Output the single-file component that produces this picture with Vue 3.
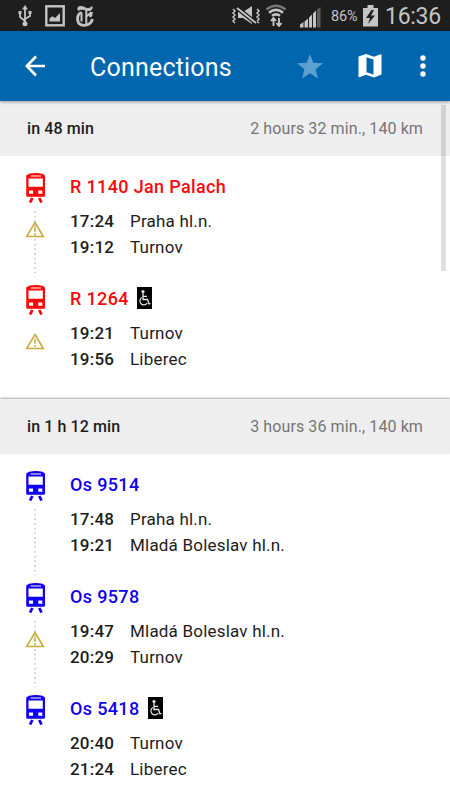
<template>
  <div class="screen">
    <div class="status-bar">
      <svg class="usb" width="14" height="22" viewBox="0 0 14 22" fill="none" stroke="#c4c4c4" stroke-width="1.8">
        <path d="M7 18V4M2 7v5l5 4M12 7v4l-5 3" />
        <path d="M7 0l3 4.5H4zM.5 6h3v3h-3zM10.5 6h3v3h-3z" fill="#c4c4c4" stroke="none" />
        <circle cx="7" cy="18.8" r="2.5" fill="#c4c4c4" stroke="none" />
      </svg>
      <svg class="picture" width="20" height="22" viewBox="0 0 20 22">
        <rect x="1.3" y="1.3" width="17.4" height="19" fill="none" stroke="#c4c4c4" stroke-width="2.4" />
        <path d="M4.5 16.5v-3l3-2.3 2.5 1.8 5-5v8.5z" fill="#c4c4c4" />
      </svg>
      <svg class="times" width="18" height="22" viewBox="0 0 18 22" fill="none" stroke="#c4c4c4">
        <path d="M2.5 5.5C0 1.5 5 .5 8 2.2s5.5 2 8-.7c1 3-2 4.800-5 3.800S4.500 3.500 2.500 5.500z" fill="#c4c4c4" stroke-width="1" />
        <path d="M5.5 7.5C.5 9 .5 17.5 4.500 19.500s10.500.500 12-5.500" stroke-width="2.800" />
        <path d="M10.300 5v14M5.500 7.500v9M10.500 11.500c1.500-2 3-2.500 5-4.500M16 7l-1 4" stroke-width="2" />
        <circle cx="14.500" cy="10.500" r="1.700" fill="#c4c4c4" stroke="none" />
      </svg>

      <svg class="mute" width="30" height="22" viewBox="0 0 30 22" fill="none" stroke="#c4c4c4">
        <path d="M2 4l2 2-2 2 2 2-2 2 2 2-2 2 2 2M26 4l2 2-2 2 2 2-2 2 2 2-2 2 2 2" stroke-width="1.5" />
        <path d="M7 7h5l9-6v18l-9-6H7z" fill="#c4c4c4" stroke="none" />
        <path d="M6 3l19 15" stroke="#1e1e1e" stroke-width="4.5" />
        <path d="M6 3l19 15" stroke-width="2" />
      </svg>
      <svg class="wifi" width="22" height="23" viewBox="0 0 22 23" fill="none" stroke="#c4c4c4">
        <path d="M1.5 5.5q9.500-7.500 19 0" stroke="#777" stroke-width="2.500" />
        <path d="M4 8.700q7-5.500 14 0M7 11.800q4-3 8 0" stroke-width="2.600" />
        <path d="M8.500 22v-8M6 17l2.500-3 2.500 3M14 14v8M11.500 19l2.500 3 2.500-3" stroke-width="1.900" />
      </svg>
      <svg class="signal" width="21" height="21" viewBox="0 0 21 21">
        <path d="M0 20.500v-3l3.500-2.500v5.500zM4.500 20.500v-6l3.500-3v9zM9 20.500v-10l3-3v13zM13 20.500v-14l3-3v17z" fill="#c4c4c4" />
        <path d="M17 20.500v-18L20.500 0v20.500z" fill="#5c5c5c" />
      </svg>
      <span class="percent">86%</span>
      <svg class="battery" width="15" height="22" viewBox="0 0 15 22">
        <path d="M4.500 0h6v3H15v18.500H0V3h4.500z" fill="#c4c4c4" />
        <path d="M8.500 5L3 13h4l-2 6 7-8.500H8L11 5z" fill="#1e1e1e" />
      </svg>
      <span class="clock">16:36</span>
    </div>

    <header class="toolbar">
      <svg class="back" width="22" height="22" viewBox="0 0 22 22" fill="none" stroke="#fff" stroke-width="2.700">
        <path d="M11 1.500L1.800 11l9.200 9.500M2 11h18" />
      </svg>
      <h1>Connections</h1>
      <svg class="star" width="26" height="25" viewBox="0 0 26 25">
        <path d="M13 0l3.300 8.800 9.700.500-7.500 6 2.500 9.300-8-5.300-8 5.300 2.500-9.300L0 9.300l9.700-.500z" fill="#5da0d2" />
      </svg>
      <svg class="map" width="24" height="24" viewBox="0 0 24 24">
        <path d="M.500 2.500L8 0l8 2.700L22.500.300q1-.300 1 .800v19.500L16 23.500 8 20.700 1.500 23.300q-1 .200-1-.800z" fill="#fff" />
        <path d="M8.500 3.300l7 2.300v15l-7-2.400z" fill="#0066ae" />
      </svg>
      <svg class="more" width="6" height="22" viewBox="0 0 6 22" fill="#fff">
        <circle cx="3" cy="3" r="2.700" />
        <circle cx="3" cy="11" r="2.700" />
        <circle cx="3" cy="19" r="2.700" />
      </svg>
    </header>

    <main class="list">
      <div class="scrollbar"></div>
      <section v-for="c in connections" :key="c.start" class="connection">
        <div class="summary">
          <span class="start">{{ c.start }}</span>
          <span class="length">{{ c.length }}</span>
        </div>
        <div class="trains">
          <article v-for="(t, i) in c.trains" :key="t.name" class="train" :class="t.type">
            <div class="rail">
              <svg class="vehicle" width="20" height="30" viewBox="0 0 20 30">
                <path
                  fill="currentColor"
                  fill-rule="evenodd"
                  d="M3 .8q6.700-1.600 13.400 0l2.600 1.700v20q0 1.300-1.300 1.300H1.500Q.200 23.800 .200 22.500v-20zM4.500 2.400v1.200h10.500V2.400zM2.500 5.500v8.200h14.300V5.500zM3 17.600v3.200h4v-3.200zM12.300 17.600v3.200h4v-3.200z"
                />
                <path d="M6.300 25L4.100 29.500M13.300 25l2.200 4.500" stroke="currentColor" stroke-width="2.800" />
              </svg>
              <svg v-if="i < c.trains.length - 1" class="dots" width="4" height="70" viewBox="0 0 4 70">
                <path d="M2 1v66" stroke="#ccc" stroke-width="1.600" stroke-dasharray="1.700 2.970" />
              </svg>
              <svg v-if="t.warning" class="warning" width="20" height="17" viewBox="0 0 20 17" fill="none" stroke="#c9ad3c">
                <path d="M10 1.500L18.300 15.500H1.700z" stroke-width="1.600" />
                <path d="M10 5.800v5M10 12v1.700" stroke-width="1.500" />
              </svg>
            </div>
            <div class="info">
              <h2>
                {{ t.name }}
                <svg v-if="t.wheelchair" class="wheelchair" width="15" height="22" viewBox="0 0 15 22" fill="none" stroke="#e8e8e8">
                  <rect width="15" height="22" fill="#000" stroke="none" />
                  <circle cx="6" cy="4.500" r="1.600" fill="#e8e8e8" stroke="none" />
                  <path d="M6 6v6.500h4.500l1.500 4.500 1.500-.500M6 9.300h4" stroke-width="1.300" />
                  <path d="M4.800 10.500a4 4 0 1 0 5.500 5.500" stroke-width="1.200" />
                </svg>
              </h2>
              <div v-for="s in t.stops" :key="s.time" class="stop">
                <span class="time">{{ s.time }}</span>
                <span class="place">{{ s.place }}</span>
              </div>
            </div>
          </article>
        </div>
      </section>
    </main>
  </div>
</template>

<script setup>
const connections = [
  {
    start: 'in 48 min',
    length: '2 hours 32 min., 140 km',
    trains: [
      {
        name: 'R 1140 Jan Palach',
        type: 'fast',
        warning: true,
        stops: [
          { time: '17:24', place: 'Praha hl.n.' },
          { time: '19:12', place: 'Turnov' }
        ]
      },
      {
        name: 'R 1264',
        type: 'fast',
        warning: true,
        wheelchair: true,
        stops: [
          { time: '19:21', place: 'Turnov' },
          { time: '19:56', place: 'Liberec' }
        ]
      }
    ]
  },
  {
    start: 'in 1 h 12 min',
    length: '3 hours 36 min., 140 km',
    trains: [
      {
        name: 'Os 9514',
        type: 'local',
        stops: [
          { time: '17:48', place: 'Praha hl.n.' },
          { time: '19:21', place: 'Mladá Boleslav hl.n.' }
        ]
      },
      {
        name: 'Os 9578',
        type: 'local',
        warning: true,
        stops: [
          { time: '19:47', place: 'Mladá Boleslav hl.n.' },
          { time: '20:29', place: 'Turnov' }
        ]
      },
      {
        name: 'Os 5418',
        type: 'local',
        wheelchair: true,
        stops: [
          { time: '20:40', place: 'Turnov' },
          { time: '21:24', place: 'Liberec' }
        ]
      }
    ]
  }
]
</script>

<style>
body {
  margin: 0;
}
</style>

<style scoped>
.screen {
  display: flex;
  flex-direction: column;
  width: 450px;
  height: 800px;
  overflow: hidden;
  background: #fff;
  font-family: Roboto, 'Liberation Sans', sans-serif;
  color: #1c1c1c;
}

svg {
  display: block;
  flex: none;
}

.status-bar {
  display: flex;
  align-items: center;
  flex: none;
  height: 31px;
  padding: 0 10px 0 18px;
  background: #1e1e1e;
  color: #c4c4c4;
  white-space: nowrap;
}

.picture {
  margin-left: 13px;
}

.times {
  margin-left: 11px;
}

.mute {
  margin-left: auto;
}

.wifi {
  margin-left: 4px;
}

.signal {
  margin: 4px 0 0 13px;
}

.percent {
  width: 28px;
  margin: 1px 0 0 10px;
  font-size: 14.5px;
  letter-spacing: -0.1px;
}

.battery {
  margin-left: 4px;
}

.clock {
  width: 55px;
  margin: 1px 0 0 7px;
  font-size: 23px;
  letter-spacing: -0.3px;
}

.toolbar {
  position: relative;
  z-index: 2;
  display: flex;
  align-items: center;
  flex: none;
  height: 70px;
  padding: 0 25px;
  box-sizing: border-box;
  background: #0066ae;
  color: #fff;
  box-shadow: 0 1px 3px rgba(0, 0, 0, 0.35);
}

h1 {
  flex: 1;
  margin: 2px 0 0 43px;
  font-size: 25px;
  font-weight: 400;
  letter-spacing: 0.2px;
}

.map {
  margin-left: 35px;
}

.more {
  margin: 0 -1px 0 38px;
}

.list {
  position: relative;
  flex: 1;
}

.scrollbar {
  position: absolute;
  top: 4px;
  right: 4px;
  width: 5px;
  height: 166px;
  background: rgba(0, 0, 0, 0.12);
}

.summary {
  display: flex;
  align-items: center;
  justify-content: space-between;
  height: 55px;
  padding: 0 27px;
  box-sizing: border-box;
  background: #eee;
  font-size: 16px;
  letter-spacing: 0.1px;
}

.connection + .connection .summary {
  box-shadow: 0 -1px 2px rgba(0, 0, 0, 0.35);
}

.start {
  font-weight: 500;
}

.length {
  color: #757575;
}

.trains {
  padding: 12px 0 26px;
}

.train {
  display: flex;
}

.train + .train {
  margin-top: 19px;
}

.fast {
  color: #fa0a0a;
}

.local {
  color: #1000f0;
}

.rail {
  position: relative;
  width: 70px;
}

.vehicle {
  margin: 5px 0 0 26px;
}

.dots {
  position: absolute;
  top: 42px;
  left: 33px;
}

.warning {
  position: absolute;
  top: 53px;
  left: 25px;
}

h2 {
  display: flex;
  align-items: center;
  gap: 8px;
  height: 36px;
  margin: 0 0 4px;
  font-size: 18px;
  font-weight: 500;
  letter-spacing: 0.35px;
}

.stop {
  display: flex;
  height: 26px;
  line-height: 26px;
  font-size: 17px;
  letter-spacing: 0.2px;
  color: #1c1c1c;
}

.stop:last-child {
  margin-bottom: 1px;
}

.time {
  width: 60px;
  font-weight: 500;
}
</style>
